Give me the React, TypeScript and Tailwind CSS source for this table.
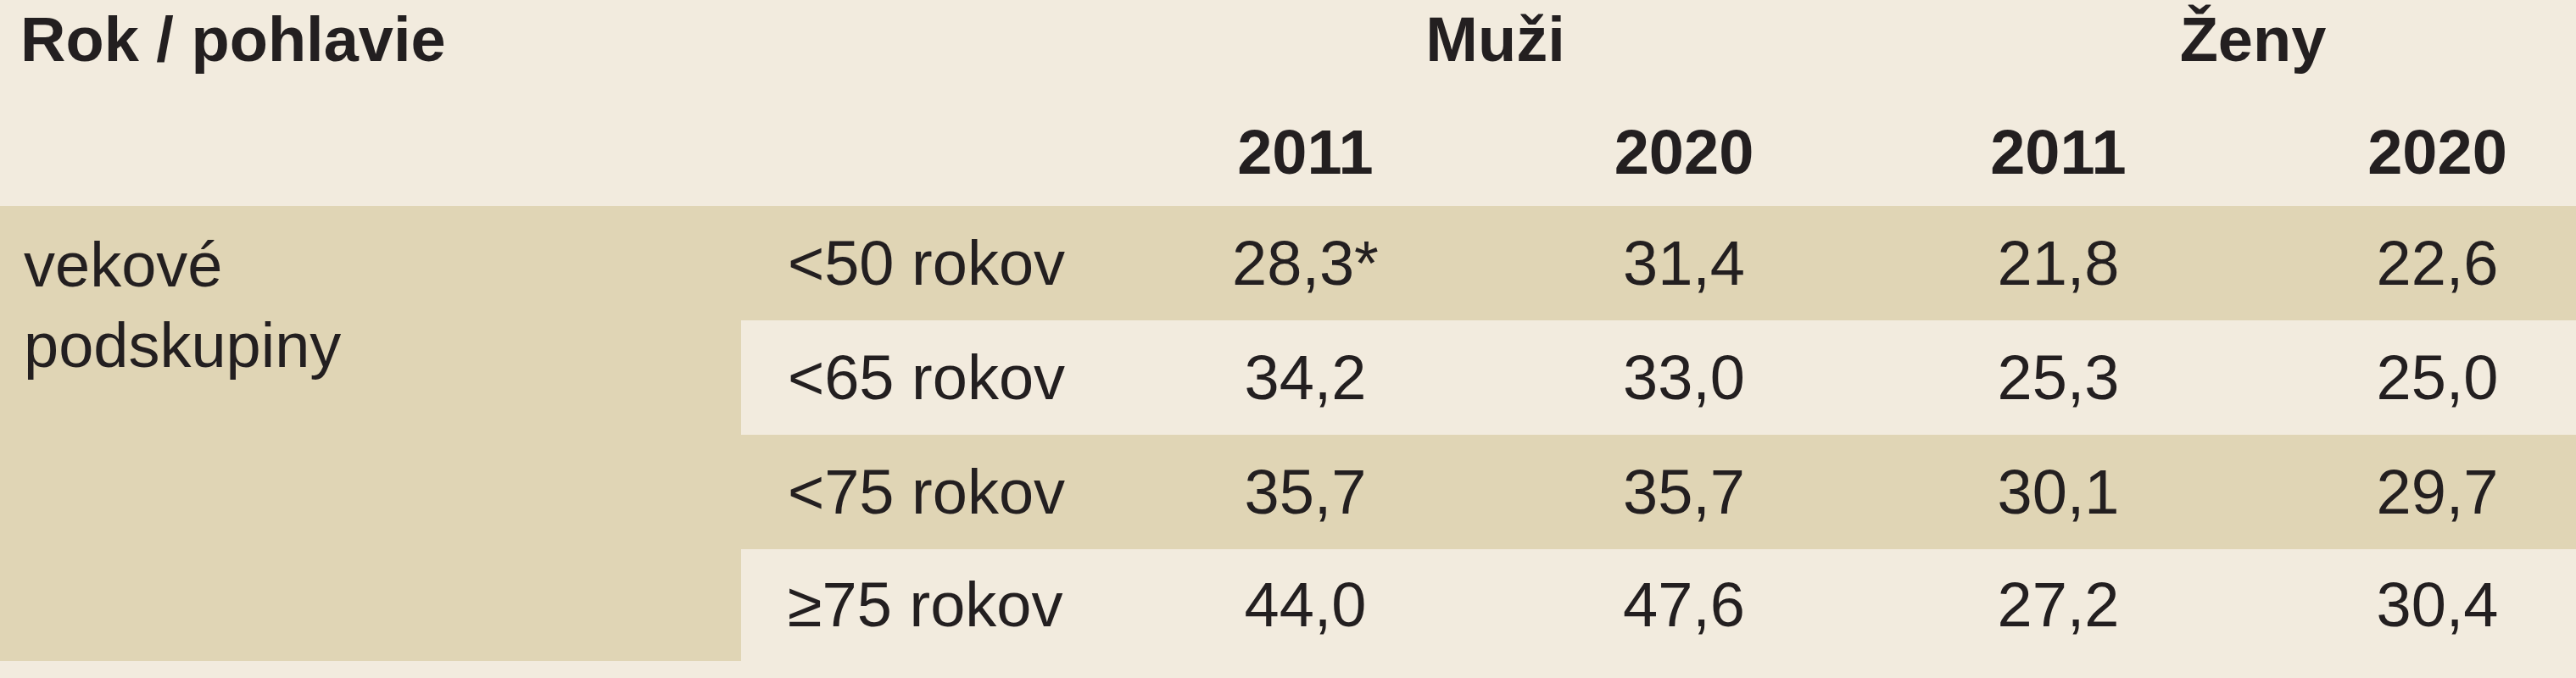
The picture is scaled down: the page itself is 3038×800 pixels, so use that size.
import React from "react";

const rows = [
  { age: "<50 rokov", vals: ["28,3*", "31,4", "21,8", "22,6"], dark: true },
  { age: "<65 rokov", vals: ["34,2", "33,0", "25,3", "25,0"], dark: false },
  { age: "<75 rokov", vals: ["35,7", "35,7", "30,1", "29,7"], dark: true },
  { age: "≥75 rokov", vals: ["44,0", "47,6", "27,2", "30,4"], dark: false },
];

export default function App() {
  return (
    <div className="w-[3038px] h-[800px] bg-[#f2ebde] text-[#231f20] font-['Liberation_Sans',Arial,sans-serif] text-[74px] leading-[82px] overflow-hidden">
      <div className="grid grid-cols-[874px_443px_445px_448px_435px_393px] grid-rows-[120px_123px_135px_135px_135px_132px]">
        {/* header row 1 */}
        <div className="col-span-2 pl-[24px] pt-[6px] font-bold">Rok / pohlavie</div>
        <div className="col-span-2 flex justify-center pt-[6px] font-bold">Muži</div>
        <div className="col-span-2 flex justify-center pl-[66px] pt-[6px] font-bold">Ženy</div>
        {/* header row 2 */}
        <div className="col-span-2" />
        <div className="flex justify-center pt-[19px] font-bold">2011</div>
        <div className="flex justify-center pt-[19px] font-bold">2020</div>
        <div className="flex justify-center pt-[19px] font-bold">2011</div>
        <div className="flex justify-center pl-[66px] pt-[19px] font-bold">2020</div>
        {/* body */}
        <div className="row-span-4 bg-[#e0d5b5] pl-[28px] pt-[22px] leading-[95px]">
          vekové
          <br />
          podskupiny
        </div>
        {rows.map((r, i) => {
          const bg = r.dark ? "bg-[#e0d5b5]" : "bg-[#f2ebde]";
          return (
            <React.Fragment key={i}>
              <div className={`${bg} flex items-center pl-[55px]`}>{r.age}</div>
              <div className={`${bg} flex items-center justify-center`}>{r.vals[0]}</div>
              <div className={`${bg} flex items-center justify-center`}>{r.vals[1]}</div>
              <div className={`${bg} flex items-center justify-center`}>{r.vals[2]}</div>
              <div className={`${bg} flex items-center justify-center pl-[66px]`}>{r.vals[3]}</div>
            </React.Fragment>
          );
        })}
      </div>
    </div>
  );
}
